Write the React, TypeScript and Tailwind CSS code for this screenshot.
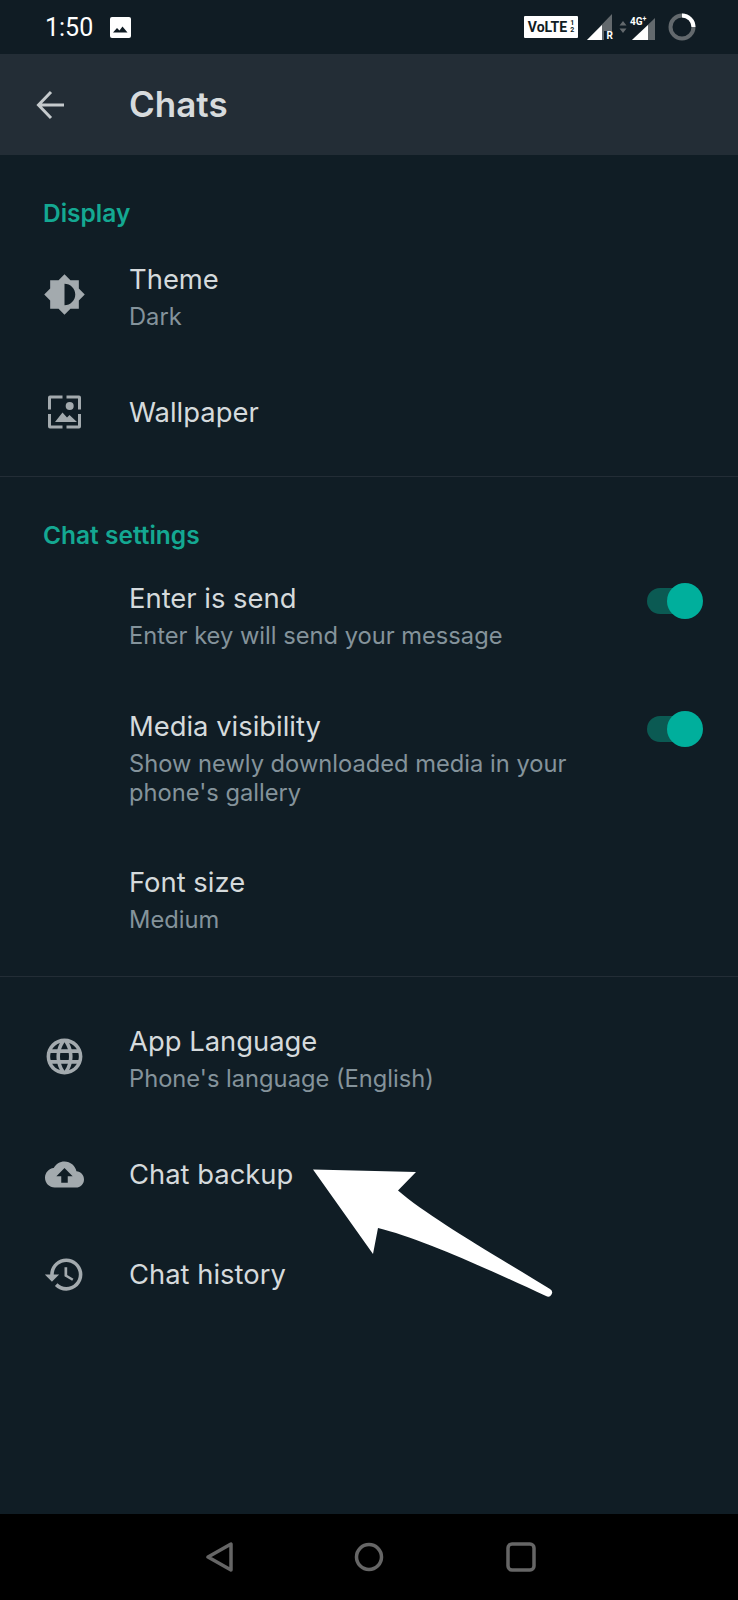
import type { ReactNode } from 'react';

function Toggle() {
  return (
    <div className="relative mt-[8px] h-[26px] w-[50px] shrink-0 rounded-full bg-[#0b5a53]">
      <div className="absolute -top-[5px] right-[-6px] h-[36px] w-[36px] rounded-full bg-[#00af9c]" />
    </div>
  );
}

function Heading({ children }: { children: ReactNode }) {
  return <p className="pl-[43px] text-[24.500px] leading-[30px] font-semibold text-[#14a892]">{children}</p>;
}

function Row({
  icon,
  title,
  sub,
  toggle,
}: {
  icon?: ReactNode;
  title: string;
  sub?: string[];
  toggle?: boolean;
}) {
  return (
    <div className={toggle ? 'flex items-start' : 'flex items-center'}>
      <div className={sub ? 'flex w-[129px] shrink-0 items-center pb-[4px] pl-[43px]' : 'flex w-[129px] shrink-0 items-center pl-[43px]'}>
        {icon}
      </div>
      <div className="flex-1">
        <p className="text-[27.400px] leading-[37px] text-[#d5dadc]">{title}</p>
        {sub && (
          <div className="mt-1 text-[23.700px] leading-[29px] text-[#84939b]">
            {sub.map((line) => (
              <p key={line}>{line}</p>
            ))}
          </div>
        )}
      </div>
      {toggle && (
        <div className="pr-[41px]">
          <Toggle />
        </div>
      )}
    </div>
  );
}

function Icon({ d, small }: { d: string; small?: boolean }) {
  return (
    <svg viewBox="0 0 24 24" className={small ? 'mx-[2px] h-[39px] w-[39px] fill-[#a3aaae]' : 'h-[43px] w-[43px] fill-[#a3aaae]'}>
      <path fillRule="evenodd" d={d} />
    </svg>
  );
}

function WallpaperIcon() {
  return (
    <svg viewBox="0 0 43 43" className="h-[43px] w-[43px] fill-[#a3aaae]">
      <path d="M5 6.500a2 2 0 0 1 2-2h12.500v3H8v11H5zM23.500 4.500H36a2 2 0 0 1 2 2v12h-3v-11H23.500zM5 23h3v11.500h11.500v3H7a2 2 0 0 1-2-2zM35 23h3v12.500a2 2 0 0 1-2 2H23.500v-3H35z" />
      <circle cx="26.700" cy="15" r="4" />
      <path d="M12 31l7.500-9.500L24 26.500l2.500-2.500L34 31z" />
    </svg>
  );
}

function StatusBar() {
  return (
    <div className="flex h-[54px] items-center bg-[#101c24] pl-[45px] text-white">
      <span className="font-['Roboto',sans-serif] text-[25px] leading-none">1:50</span>
      <svg viewBox="0 0 21 21" className="ml-[17px] h-[21px] w-[21px]">
        <rect width="21" height="21" rx="2" fill="#fff" />
        <path d="M3 15.500l4-4.500 2.500 2.500 3-4 5 6z" fill="#101c24" />
      </svg>
      <div className="ml-auto flex items-center pr-[42px] font-['Roboto',sans-serif]">
        <div className="flex h-[22px] w-[54px] items-center justify-center rounded-[1px] bg-white text-[14px] leading-none font-bold text-[#101c24]">
          VoLTE
          <span className="ml-[3px] text-[7px] leading-[7px]">1<br />2</span>
        </div>
        <div className="relative ml-[9px] h-[26px] w-[25px]">
          <svg viewBox="0 0 25 26" className="h-[26px] w-[25px]">
            <path d="M25 0v26H0z" fill="#63696d" />
            <path d="M15 11v15H0z" fill="#fff" />
            <rect x="17" y="17" width="8" height="9" fill="#101c24" />
          </svg>
          <span className="absolute right-[-1px] bottom-[-1px] text-[10px] leading-none font-bold">R</span>
        </div>
        <svg viewBox="0 0 8 12" className="ml-[7px] h-[12px] w-[8px] fill-[#63696d]">
          <path d="M4 0l3.500 4.500h-7zM4 12L.5 7.500h7z" />
        </svg>
        <div className="relative mt-[4px] ml-[5px] h-[22px] w-[23px]">
          <svg viewBox="0 0 23 22" className="h-[22px] w-[23px]">
            <path d="M23 0v22H0z" fill="#63696d" />
            <path d="M16 7v15H0z" fill="#fff" />
          </svg>
          <span className="absolute -top-[2px] -left-[2px] text-[10px] leading-[11px] font-bold">
            4G<span className="align-top text-[7px] leading-[7px]">+</span>
          </span>
        </div>
        <svg viewBox="0 0 28 28" className="ml-[13px] h-[28px] w-[28px] fill-none stroke-[4]">
          <circle cx="14" cy="14" r="11.500" stroke="#63696d" />
          <path d="M14 2.500A11.500 11.500 0 0 1 25.500 14" stroke="#fff" />
        </svg>
      </div>
    </div>
  );
}

function NavBar() {
  return (
    <div className="flex h-[86px] items-start gap-[120px] bg-black pt-[28px] pl-[206px]">
      <svg viewBox="0 0 28 30" className="h-[30px] w-[28px] fill-none stroke-[#666] stroke-[3.500]" strokeLinejoin="round">
        <path d="M25 2v26L2 15z" />
      </svg>
      <svg viewBox="0 0 30 30" className="h-[30px] w-[30px] fill-none stroke-[#666] stroke-[3.500]">
        <circle cx="15" cy="15" r="12.500" />
      </svg>
      <svg viewBox="0 0 30 30" className="ml-[2px] h-[30px] w-[30px] fill-none stroke-[#666] stroke-[3.500]">
        <rect x="2" y="2" width="26" height="26" rx="4" />
      </svg>
    </div>
  );
}

export default function App() {
  return (
    <div className="relative flex h-[1600px] w-[738px] flex-col overflow-hidden bg-[#101d25] font-['Inter',sans-serif]">
      <StatusBar />
      <header className="flex h-[101px] items-center bg-[#232d36]">
        <svg viewBox="0 0 30 30" className="ml-[36px] h-[30px] w-[30px] fill-none stroke-[#c5cacd] stroke-[3]">
          <path d="M28 15H3M15 2L2.500 15 15 28" />
        </svg>
        <h1 className="ml-[63px] text-[35px] leading-none font-semibold text-[#d7dbdd]">Chats</h1>
      </header>

      <main className="flex-1">
        <section className="border-b border-[#232d36] pt-[43px] pb-[42px]">
          <Heading>Display</Heading>
          <div className="flex flex-col gap-[60px] pt-[33px]">
            <Row
              icon={
                <Icon d="M20 15.310L23.310 12 20 8.690V4h-4.690L12 .69 8.690 4H4v4.690L.69 12 4 15.310V20h4.690L12 23.310 15.310 20H20v-4.690zM12 18V6c3.310 0 6 2.690 6 6s-2.690 6-6 6z" />
              }
              title="Theme"
              sub={['Dark']}
            />
            <Row icon={<WallpaperIcon />} title="Wallpaper" />
          </div>
        </section>

        <section className="border-b border-[#232d36] pt-[43px] pb-[42px]">
          <Heading>Chat settings</Heading>
          <div className="flex flex-col gap-[57.500px] pt-[30px]">
            <Row title="Enter is send" sub={['Enter key will send your message']} toggle />
            <Row title="Media visibility" sub={['Show newly downloaded media in your', "phone's gallery"]} toggle />
            <Row title="Font size" sub={['Medium']} />
          </div>
        </section>

        <section className="flex flex-col pt-[46px]">
          <Row
            icon={
              <Icon d="M11.990 2C6.470 2 2 6.480 2 12s4.470 10 9.990 10C17.520 22 22 17.520 22 12S17.520 2 11.990 2zm6.930 6h-2.950c-.32-1.250-.78-2.450-1.380-3.560 1.840.63 3.370 1.910 4.330 3.560zM12 4.040c.83 1.200 1.480 2.530 1.910 3.960h-3.820c.43-1.430 1.080-2.760 1.910-3.960zM4.260 14C4.100 13.360 4 12.690 4 12s.1-1.360.26-2h3.380c-.08.66-.14 1.320-.14 2 0 .68.06 1.340.14 2H4.260zm.82 2h2.950c.32 1.250.78 2.450 1.380 3.560-1.840-.63-3.370-1.900-4.330-3.560zm2.950-8H5.080c.96-1.660 2.490-2.930 4.330-3.560C8.810 5.550 8.350 6.750 8.030 8zM12 19.960c-.83-1.200-1.480-2.530-1.910-3.960h3.820c-.43 1.430-1.080 2.760-1.910 3.960zM14.340 14H9.660c-.09-.66-.16-1.320-.16-2 0-.68.07-1.350.16-2h4.680c.09.65.16 1.320.16 2 0 .68-.07 1.340-.16 2zm.25 5.560c.6-1.110 1.060-2.310 1.380-3.560h2.950c-.96 1.650-2.490 2.930-4.330 3.560zM16.360 14c.08-.66.14-1.320.14-2 0-.68-.06-1.340-.14-2h3.380c.16.64.26 1.310.26 2s-.1 1.360-.26 2h-3.380z" />
            }
            title="App Language"
            sub={["Phone's language (English)"]}
          />
          <div className="mt-[62px]">
            <Row
              icon={
                <Icon
                  small
                  d="M19.350 10.040C18.670 6.590 15.640 4 12 4 9.110 4 6.600 5.640 5.350 8.040 2.340 8.360 0 10.910 0 14c0 3.310 2.690 6 6 6h13c2.760 0 5-2.240 5-5 0-2.640-2.050-4.780-4.650-4.960zM14 13v4h-4v-4H7l5-5 5 5h-3z"
                />
              }
              title="Chat backup"
            />
          </div>
          <div className="mt-[59px]">
            <Row
              icon={
                <Icon d="M13 3c-4.970 0-9 4.030-9 9H1l3.890 3.890.07.14L9 12H6c0-3.870 3.130-7 7-7s7 3.130 7 7-3.130 7-7 7c-1.930 0-3.680-.79-4.940-2.060l-1.420 1.420C8.270 19.990 10.510 21 13 21c4.970 0 9-4.030 9-9s-4.030-9-9-9zm-1 5v5l4.280 2.540.72-1.210-3.500-2.080V8H12z" />
              }
              title="Chat history"
            />
          </div>
        </section>
      </main>

      <NavBar />

      {/* annotation arrow drawn over the screenshot */}
      <svg viewBox="0 0 270 170" className="absolute top-[1150px] left-[300px] h-[170px] w-[270px] fill-white">
        <path d="M13 19.500L116 22 98 40.500C130 68 190 102 250 139a4 4 0 0 1-4 7C190 120 120 88 78 78L73 104z" />
      </svg>
    </div>
  );
}
